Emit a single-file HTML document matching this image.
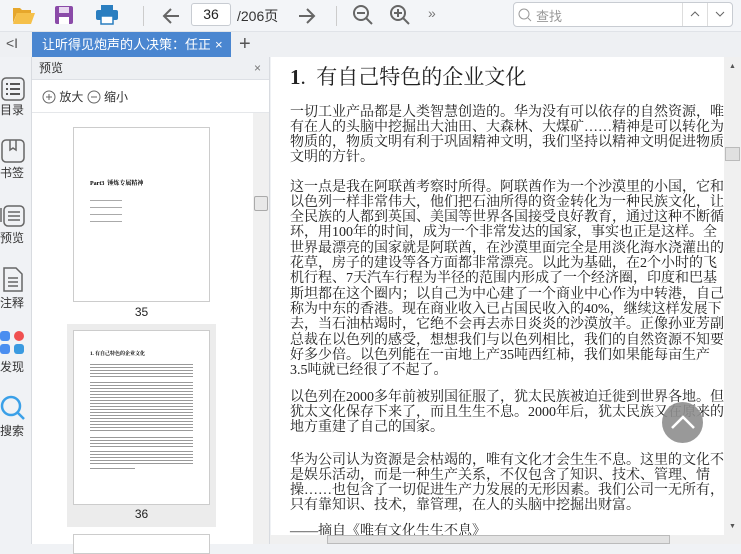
<!DOCTYPE html>
<html><head><meta charset="utf-8">
<style>
*{margin:0;padding:0;box-sizing:border-box}
body{width:741px;height:544px;overflow:hidden;background:#f0f2f5;font-family:"Liberation Sans","Noto Sans CJK SC",sans-serif;position:relative}
.abs{position:absolute}
#tb{left:0;top:0;width:741px;height:32px;background:#f3f5f8;border-bottom:1px solid #e0e3e8}
#tabs{left:0;top:32px;width:741px;height:25px;background:#eef0f3}
#tab{left:32px;top:32px;width:199px;height:25px;background:#4a86d0;color:#fff;font-size:13px;line-height:25px;padding-left:10px;white-space:nowrap;overflow:hidden}
#strip{left:0;top:57px;width:32px;height:487px;background:#f0f2f5;border-right:1px solid #d8dbe0}
.sl{position:absolute;left:0;width:32px;font-size:12px;color:#333;text-align:left}
#prev{left:32px;top:57px;width:238px;height:487px;background:#fff;border-right:1px solid #d8dbe0}
#ph{left:0;top:0;width:237px;height:23px;background:#eef0f3;border-bottom:1px solid #dde0e5;font-size:12px;line-height:23px;padding-left:7px;color:#333}
#content{left:271px;top:57px;width:453px;height:478px;background:#fff;font-family:"Liberation Serif","Noto Serif CJK SC",serif;color:#222;overflow:hidden}
.ln{position:absolute;left:19px;width:415px;font-size:14px;height:17px;line-height:17px;text-align:justify;text-align-last:justify;white-space:nowrap}
.ln.l{text-align-last:left}
#vs{left:724px;top:57px;width:17px;height:487px;background:#f0f0f0}
#hs{left:270px;top:535px;width:454px;height:9px;background:#f0f0f0}
</style></head><body>
<div id="tb" class="abs">
 <svg class="abs" style="left:12px;top:5px" width="24" height="20" viewBox="0 0 24 20"><path d="M1 3h7l2 2h9v3H5L1 18z" fill="#e6a72c"/><path d="M5 8h18l-4 11H1z" fill="#f5c04a"/></svg>
 <svg class="abs" style="left:54px;top:5px" width="20" height="20" viewBox="0 0 20 20"><rect x="1" y="1" width="18" height="18" rx="2" fill="#8a4aa8"/><rect x="5" y="2" width="10" height="6" fill="#e8d8f0"/><rect x="5" y="12" width="10" height="7" fill="#fff"/></svg>
 <svg class="abs" style="left:96px;top:5px" width="22" height="20" viewBox="0 0 22 20"><rect x="5" y="0" width="12" height="5" fill="#2a7ec0"/><rect x="0" y="5" width="22" height="10" rx="2" fill="#2a7ec0"/><rect x="5" y="11" width="12" height="8" fill="#fff" stroke="#2a7ec0" stroke-width="1.5"/></svg>
 <div class="abs" style="left:143px;top:6px;width:1px;height:20px;background:#ccc"></div>
 <svg class="abs" style="left:161px;top:6px" width="20" height="20" viewBox="0 0 20 20"><path d="M18 10H3M10 3L3 10l7 7" stroke="#666" stroke-width="2" fill="none"/></svg>
 <div class="abs" style="left:191px;top:3px;width:40px;height:23px;border:1px solid #c8ccd2;border-radius:3px;background:#fff;font-size:14px;text-align:center;line-height:21px;color:#222">36</div>
 <div class="abs" style="left:237px;top:6px;font-size:14px;color:#333">/206页</div>
 <svg class="abs" style="left:297px;top:6px" width="20" height="20" viewBox="0 0 20 20"><path d="M2 10h15M10 3l7 7-7 7" stroke="#666" stroke-width="2" fill="none"/></svg>
 <div class="abs" style="left:336px;top:6px;width:1px;height:20px;background:#ccc"></div>
 <svg class="abs" style="left:352px;top:4px" width="22" height="22" viewBox="0 0 22 22"><circle cx="9" cy="9" r="7" stroke="#666" stroke-width="2" fill="none"/><path d="M5 9h8M14 14l6 6" stroke="#666" stroke-width="2"/></svg>
 <svg class="abs" style="left:389px;top:4px" width="22" height="22" viewBox="0 0 22 22"><circle cx="9" cy="9" r="7" stroke="#666" stroke-width="2" fill="none"/><path d="M5 9h8M9 5v8M14 14l6 6" stroke="#666" stroke-width="2"/></svg>
 <div class="abs" style="left:428px;top:5px;font-size:14px;color:#777">»</div>
 <div class="abs" style="left:513px;top:2px;width:220px;height:25px;border:1px solid #c8ccd2;border-radius:4px;background:#fff"></div>
 <svg class="abs" style="left:518px;top:8px" width="14" height="14" viewBox="0 0 14 14"><circle cx="6" cy="6" r="5" stroke="#999" fill="none"/><path d="M10 10l3 3" stroke="#999"/></svg>
 <div class="abs" style="left:536px;top:6px;font-size:13px;color:#999">查找</div>
 <div class="abs" style="left:682px;top:3px;width:1px;height:23px;background:#ddd"></div>
 <div class="abs" style="left:707px;top:3px;width:1px;height:23px;background:#ddd"></div>
 <svg class="abs" style="left:690px;top:11px" width="10" height="6"><path d="M1 5l4-4 4 4" stroke="#666" fill="none"/></svg>
 <svg class="abs" style="left:715px;top:11px" width="10" height="6"><path d="M1 1l4 4 4-4" stroke="#666" fill="none"/></svg>
</div>
<div id="tabs" class="abs"><div class="abs" style="left:6px;top:3px;font-size:14px;color:#555">&lt;I</div><div class="abs" style="left:239px;top:0;font-size:20px;color:#555;line-height:24px">+</div></div>
<div id="tab" class="abs"><div style="width:168px;overflow:hidden">让听得见炮声的人决策：任正非</div><span style="position:absolute;left:183px;top:0">×</span></div>
<div id="strip" class="abs">
 <svg class="abs" style="left:1px;top:20px" width="24" height="24" viewBox="0 0 24 24"><rect x="1" y="1" width="22" height="22" rx="4" stroke="#666" stroke-width="1.5" fill="none"/><path d="M5 7h2M9 7h10M5 12h2M9 12h10M5 17h2M9 17h10" stroke="#555" stroke-width="2"/></svg>
 <div class="sl" style="top:44px">目录</div>
 <svg class="abs" style="left:1px;top:82px" width="24" height="24" viewBox="0 0 24 24"><rect x="1" y="1" width="22" height="22" rx="4" stroke="#666" stroke-width="1.5" fill="none"/><path d="M9 1v10l3-2 3 2V1" stroke="#666" stroke-width="1.5" fill="none"/></svg>
 <div class="sl" style="top:107px">书签</div>
 <svg class="abs" style="left:0px;top:145px" width="26" height="26" viewBox="0 0 26 26"><rect x="4" y="4" width="20" height="20" rx="4" stroke="#666" stroke-width="1.5" fill="none"/><path d="M1 20V6M8 10h12M8 14h12M8 18h12" stroke="#666" stroke-width="1.5"/></svg>
 <div class="sl" style="top:172px">预览</div>
 <svg class="abs" style="left:1px;top:210px" width="24" height="26" viewBox="0 0 24 26"><path d="M3 1h12l6 6v17H3z" stroke="#666" stroke-width="1.5" fill="none"/><path d="M7 11h10M7 15h10M7 19h10" stroke="#666" stroke-width="1.5"/></svg>
 <div class="sl" style="top:237px">注释</div>
 <div class="abs" style="left:0;top:274px;width:10px;height:10px;border-radius:3px;background:#4a8ef0"></div>
 <div class="abs" style="left:14px;top:274px;width:10px;height:10px;border-radius:5px;background:#f05050"></div>
 <div class="abs" style="left:0;top:287px;width:10px;height:10px;border-radius:3px;background:#4a8ef0"></div>
 <div class="abs" style="left:14px;top:287px;width:10px;height:10px;border-radius:3px;background:#3a9ae0"></div>
 <div class="sl" style="top:301px">发现</div>
 <svg class="abs" style="left:0px;top:338px" width="26" height="26" viewBox="0 0 26 26"><circle cx="11" cy="11" r="9" stroke="#3aa0e8" stroke-width="2.5" fill="none"/><path d="M18 18l6 6" stroke="#3aa0e8" stroke-width="2.5"/></svg>
 <div class="sl" style="top:365px">搜索</div>
</div>
<div id="prev" class="abs">
 <div id="ph" class="abs">预览<span style="position:absolute;right:8px;color:#777">×</span></div>
 <div class="abs" style="left:10px;top:31px;font-size:12px;color:#333">
  <svg width="14" height="14" style="vertical-align:-3px"><circle cx="7" cy="7" r="6" stroke="#666" fill="none"/><path d="M4 7h6M7 4v6" stroke="#666"/></svg> 放大 <svg width="14" height="14" style="vertical-align:-3px"><circle cx="7" cy="7" r="6" stroke="#666" fill="none"/><path d="M4 7h6" stroke="#666"/></svg> 缩小</div>
 <div class="abs" style="left:0;top:55px;width:237px;height:1px;background:#e5e7ea"></div>
 <div class="abs" style="left:221px;top:56px;width:16px;height:431px;background:#f0f0f0"></div>
 <div class="abs" style="left:222px;top:139px;width:14px;height:15px;border:1px solid #aaa;background:#e8e8e8;border-radius:2px"></div>
 <div class="abs" style="left:41px;top:70px;width:137px;height:175px;border:1px solid #ccc;background:#fff">
  <div style="position:absolute;left:16px;top:50px;font-size:6px;font-weight:bold;font-family:'Liberation Serif','Noto Serif CJK SC',serif">Part3 &nbsp;锤炼专属精神</div>
  <div style="position:absolute;left:16px;top:72px;width:32px;height:1px;background:#aaa;box-shadow:0 7px #aaa,0 14px #aaa,0 21px #aaa"></div>
 </div>
 <div class="abs" style="left:41px;top:248px;width:137px;text-align:center;font-size:12px;color:#222">35</div>
 <div class="abs" style="left:35px;top:267px;width:149px;height:203px;background:#ececec"></div>
 <div class="abs" style="left:41px;top:273px;width:137px;height:175px;border:1px solid #ccc;background:#fff">
  <div style="position:absolute;left:16px;top:19px;font-size:5px;font-weight:bold;font-family:'Liberation Serif','Noto Serif CJK SC',serif">1. 有自己特色的企业文化</div>
  <div style="position:absolute;left:16px;top:33px;width:103px;height:13px;background:repeating-linear-gradient(#999 0 1px,#fff 1px 3px)"></div>
  <div style="position:absolute;left:16px;top:51px;width:103px;height:51px;background:repeating-linear-gradient(#999 0 1px,#fff 1px 3px)"></div>
  <div style="position:absolute;left:16px;top:106px;width:103px;height:10px;background:repeating-linear-gradient(#999 0 1px,#fff 1px 3px)"></div>
  <div style="position:absolute;left:16px;top:120px;width:103px;height:13px;background:repeating-linear-gradient(#999 0 1px,#fff 1px 3px)"></div>
  <div style="position:absolute;left:16px;top:137px;width:45px;height:1px;background:#999"></div>
 </div>
 <div class="abs" style="left:41px;top:450px;width:137px;text-align:center;font-size:12px;color:#222">36</div>
 <div class="abs" style="left:41px;top:477px;width:137px;height:20px;border:1px solid #ccc;background:#fff"></div>
</div>
<div id="content" class="abs">
 <div class="abs" style="left:19px;top:7px;font-size:21px;line-height:26px;white-space:nowrap"><b>1</b>.&nbsp; 有自己特色的企业文化</div>
 <div class="ln" style="top:46.5px">一切工业产品都是人类智慧创造的。华为没有可以依存的自然资源，唯</div>
 <div class="ln" style="top:61.8px">有在人的头脑中挖掘出大油田、大森林、大煤矿……精神是可以转化为</div>
 <div class="ln" style="top:77.1px">物质的，物质文明有利于巩固精神文明，我们坚持以精神文明促进物质</div>
 <div class="ln l" style="top:92.4px">文明的方针。</div>
 <div class="ln" style="top:121.5px">这一点是我在阿联酋考察时所得。阿联酋作为一个沙漠里的小国，它和</div>
 <div class="ln" style="top:136.8px">以色列一样非常伟大，他们把石油所得的资金转化为一种民族文化，让</div>
 <div class="ln" style="top:152.1px">全民族的人都到英国、美国等世界各国接受良好教育，通过这种不断循</div>
 <div class="ln" style="top:167.4px">环，用100年的时间，成为一个非常发达的国家，事实也正是这样。全</div>
 <div class="ln" style="top:182.7px">世界最漂亮的国家就是阿联酋，在沙漠里面完全是用淡化海水浇灌出的</div>
 <div class="ln" style="top:198px">花草，房子的建设等各方面都非常漂亮。以此为基础，在2个小时的飞</div>
 <div class="ln" style="top:213.3px">机行程、7天汽车行程为半径的范围内形成了一个经济圈，印度和巴基</div>
 <div class="ln" style="top:228.6px">斯坦都在这个圈内；以自己为中心建了一个商业中心作为中转港，自己</div>
 <div class="ln" style="top:243.9px">称为中东的香港。现在商业收入已占国民收入的40%，继续这样发展下</div>
 <div class="ln" style="top:259.2px">去，当石油枯竭时，它绝不会再去赤日炎炎的沙漠放羊。正像孙亚芳副</div>
 <div class="ln" style="top:274.5px">总裁在以色列的感受，想想我们与以色列相比，我们的自然资源不知要</div>
 <div class="ln" style="top:289.8px;width:398px">好多少倍。以色列能在一亩地上产35吨西红柿，我们如果能每亩生产</div>
 <div class="ln l" style="top:305.1px">3.5吨就已经很了不起了。</div>
 <div class="ln" style="top:331.5px">以色列在2000多年前被别国征服了，犹太民族被迫迁徙到世界各地。但</div>
 <div class="ln" style="top:346.8px">犹太文化保存下来了，而且生生不息。2000年后，犹太民族又在原来的</div>
 <div class="ln l" style="top:362.1px">地方重建了自己的国家。</div>
 <div class="ln" style="top:394.5px">华为公司认为资源是会枯竭的，唯有文化才会生生不息。这里的文化不</div>
 <div class="ln" style="top:409.8px;width:398px">是娱乐活动，而是一种生产关系，不仅包含了知识、技术、管理、情</div>
 <div class="ln" style="top:425.1px">操……也包含了一切促进生产力发展的无形因素。我们公司一无所有，</div>
 <div class="ln l" style="top:440.4px">只有靠知识、技术，靠管理，在人的头脑中挖掘出财富。</div>
 <div class="ln l" style="top:466px">——摘自《唯有文化生生不息》</div>
 <div class="abs" style="left:391px;top:345px;width:41px;height:41px;border-radius:50%;background:#8e8e8e;opacity:.9"></div>
 <svg class="abs" style="left:399px;top:357px" width="26" height="16"><path d="M2 14L13 3l11 11" stroke="#fff" stroke-width="2.5" fill="none"/></svg>
</div>
<div id="vs" class="abs"><div class="abs" style="left:5px;top:6px;font-size:7px;color:#555">▲</div><div class="abs" style="left:1px;top:90px;width:15px;height:14px;background:#e0e0e0;border:1px solid #bbb"></div><div class="abs" style="left:5px;top:466px;font-size:7px;color:#555">▼</div></div>
<div id="hs" class="abs"><div class="abs" style="left:57px;top:0;width:343px;height:9px;background:#e2e2e2;border:1px solid #bbb"></div></div>
</body></html>
